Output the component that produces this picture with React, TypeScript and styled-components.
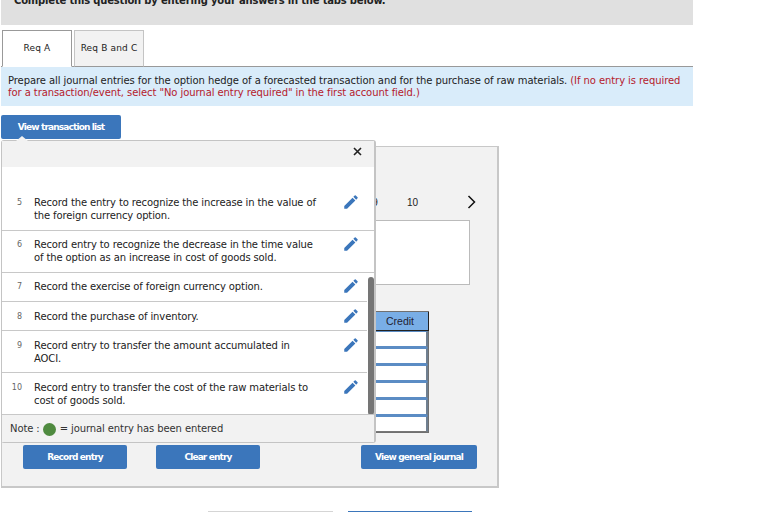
import React from "react";
import styled, { createGlobalStyle } from "styled-components";
import { MdEdit } from "react-icons/md";

const Global = createGlobalStyle`
  html, body { margin: 0; padding: 0; background: #fff; }
  body { font-family: "DejaVu Sans", Verdana, sans-serif; font-size: 10px; color: #222; overflow: hidden; }
`;

const Page = styled.div`
  width: 766px;
  height: 512px;
  overflow: hidden;
  padding-left: 1px;
  box-sizing: border-box;
`;

const Column = styled.div`
  width: 692px;
`;

const Banner = styled.div`
  height: 25px;
  background: #e0e0e0;
  font-weight: 700;
  font-size: 10px;
  line-height: 12px;
  letter-spacing: -0.18px;
  color: #222;
  padding-left: 13px;
  box-sizing: border-box;
  overflow: hidden;
  white-space: nowrap;
  & > span { display: block; margin-top: -5px; }
`;

const Tabs = styled.div`
  display: flex;
  gap: 2px;
  margin-top: 5px;
  padding-left: 1px;
  height: 36px;
  border-bottom: 1px solid #999;
`;

const Tab = styled.div<{ $active?: boolean }>`
  width: 70px;
  height: 37px;
  box-sizing: border-box;
  display: flex;
  align-items: center;
  justify-content: center;
  font-size: 9px;
  letter-spacing: 0.15px;
  border: 1px solid ${(p) => (p.$active ? "#999" : "#c4c4c4")};
  border-bottom: 1px solid ${(p) => (p.$active ? "#fff" : "#999")};
  background: ${(p) => (p.$active ? "#fff" : "#f2f2f2")};
  padding-bottom: 2px;
  color: #222;
`;

const Instruction = styled.div`
  background: #d9ecfa;
  height: 39px;
  padding: 8px 7px 0;
  box-sizing: border-box;
  font-size: 10px;
  line-height: 12px;
  letter-spacing: -0.075px;
  color: #222;
  white-space: nowrap;
`;

const Red = styled.span`
  color: #b5202c;
`;

const Btn = styled.div<{ $w: number }>`
  width: ${(p) => p.$w}px;
  height: 24px;
  background: #3b76bb;
  border-radius: 2px;
  color: #fff;
  font-weight: 700;
  font-size: 9px;
  letter-spacing: -0.85px;
  display: flex;
  align-items: center;
  justify-content: center;
  flex: none;
`;

const ListBtnRow = styled.div`
  margin-top: 9px;
`;

const Stage = styled.div`
  position: relative;
  margin-top: 7px;
  width: 498px;
`;

const Panel = styled.div`
  width: 498px;
  height: 342px;
  background: #f2f2f2;
  border: 1px solid #c8c8c8;
  border-width: 1px 2px 2px 1px;
  box-sizing: border-box;
  display: flex;
  flex-direction: column;
  padding-top: 47px;
`;

const Pager = styled.div`
  display: flex;
  align-items: center;
  justify-content: flex-end;
  height: 16px;
  padding-right: 21px;
  font-family: "Liberation Sans", Arial, sans-serif;
  font-size: 10px;
  color: #222;
`;

const PageNum = styled.span`
  margin-right: 29px;
`;

const Current = styled.span`
  margin-right: 49px;
`;

const Desc = styled.div`
  align-self: flex-end;
  width: 100px;
  height: 65px;
  background: #fff;
  border: 1px solid #bbb;
  box-sizing: border-box;
  margin: 10px 27px 0 0;
`;

const Ledger = styled.div`
  align-self: flex-end;
  width: 150px;
  margin: 26px 68px 0 0;
  border: 1px solid #707070;
  border-width: 1px 1px 1px 0;
  box-sizing: border-box;
`;

const LedgerHead = styled.div`
  height: 19px;
  box-sizing: border-box;
  background: #79aee6;
  border-bottom: 1px solid #222;
  border-right: 1px solid #222;
  margin-right: -1px;
  display: flex;
  justify-content: flex-end;
  align-items: center;
  font-family: "Liberation Sans", Arial, sans-serif;
  font-size: 10.5px;
  color: #223;
  & > span { width: 56px; text-align: center; }
`;

const LedgerRow = styled.div`
  position: relative;
  height: 17px;
  background: #fff;
  box-sizing: border-box;
  border-top: 1px solid #5b8cc4;
  border-bottom: 2px solid #5b8cc4;
  border-right: 2px solid #6f7f90;
  &::after {
    content: "";
    position: absolute;
    right: 50px;
    top: 1px;
    width: 2px;
    height: 2px;
    background: #3b76bb;
  }
  &:last-child { border-bottom: 1px solid #777; height: 16px; }
`;

const Actions = styled.div`
  display: flex;
  margin-top: 12px;
  padding-left: 21px;
`;

const Gap = styled.div<{ $w: number }>`
  width: ${(p) => p.$w}px;
  flex: none;
`;

const Popup = styled.div`
  position: absolute;
  left: 0;
  top: -6px;
  width: 375px;
  height: 303px;
  background: #fff;
  border: 1px solid #c4c4c4;
  border-right-width: 2px;
  border-radius: 3px;
  box-sizing: border-box;
  display: flex;
  flex-direction: column;
  &::before {
    content: "";
    position: absolute;
    left: 14px;
    top: -5px;
    border-left: 6px solid transparent;
    border-right: 6px solid transparent;
    border-bottom: 5px solid #f2f2f2;
  }
`;

const PopHead = styled.div`
  height: 26px;
  background: #f2f2f2;
  flex: none;
  display: flex;
  justify-content: flex-end;
  padding: 6px 12px 0 0;
  box-sizing: border-box;
`;

const List = styled.div`
  position: relative;
  flex: 1;
  padding-top: 22px;
  overflow: hidden;
`;

const Row = styled.div<{ $h: number; $pad: number; $last?: boolean }>`
  height: ${(p) => p.$h}px;
  box-sizing: border-box;
  border-bottom: ${(p) => (p.$last ? "0" : "1px solid #c8c8c8")};
  display: flex;
  align-items: flex-start;
  padding-top: ${(p) => p.$pad}px;
  position: relative;
`;

const Num = styled.div`
  width: 20px;
  flex: none;
  text-align: right;
  font-size: 8px;
  line-height: 13px;
  color: #666;
`;

const RowText = styled.div`
  margin-left: 12px;
  width: 284px;
  font-size: 10px;
  line-height: 13px;
  letter-spacing: -0.12px;
  color: #222;
`;

const Edit = styled.div<{ $top: number }>`
  position: absolute;
  left: 340px;
  top: ${(p) => p.$top}px;
  color: #3b76bb;
  display: flex;
`;

const Thumb = styled.div`
  position: absolute;
  right: 0;
  top: 110px;
  width: 6px;
  height: 138px;
  background: #757575;
  border-radius: 3px;
  box-shadow: -1px 0 #fff, 1px 0 #fff;
`;

const Note = styled.div`
  height: 28px;
  flex: none;
  background: #f2f2f2;
  border-top: 1px solid #c8c8c8;
  box-sizing: border-box;
  display: flex;
  align-items: center;
  padding-left: 8px;
  font-size: 10px;
  letter-spacing: -0.1px;
  color: #333;
  white-space: nowrap;
`;

const Dot = styled.span`
  width: 13px;
  height: 13px;
  border-radius: 50%;
  background: #4f8a3f;
  margin: 2px 4px 0 3px;
  flex: none;
`;

const Footer = styled.div`
  display: flex;
  margin: 23px 0 0 207px;
  gap: 15px;
`;

const Stub = styled.div<{ $w: number; $c: string }>`
  width: ${(p) => p.$w}px;
  height: 2px;
  border-top: 1px solid ${(p) => p.$c};
`;

const rows = [
  { n: 5, h: 42, p: 7, t: "Record the entry to recognize the increase in the value of the foreign currency option." },
  { n: 6, h: 42, p: 7, t: "Record entry to recognize the decrease in the time value of the option as an increase in cost of goods sold." },
  { n: 7, h: 29, p: 7, t: "Record the exercise of foreign currency option." },
  { n: 8, h: 29, p: 8, t: "Record the purchase of inventory." },
  { n: 9, h: 42, p: 8, t: "Record entry to transfer the amount accumulated in AOCI." },
  { n: 10, h: 41, p: 8, t: "Record entry to transfer the cost of the raw materials to cost of goods sold." },
];

export default function App() {
  return (
    <Page>
      <Global />
      <Column>
        <Banner><span>Complete this question by entering your answers in the tabs below.</span></Banner>
        <Tabs>
          <Tab $active>Req A</Tab>
          <Tab>Req B and C</Tab>
        </Tabs>
        <Instruction>
          Prepare all journal entries for the option hedge of a forecasted transaction and for the purchase of raw materials. <Red>(If no entry is required</Red>
          <br />
          <Red>for a transaction/event, select "No journal entry required" in the first account field.)</Red>
        </Instruction>
        <ListBtnRow>
          <Btn $w={120}>View transaction list</Btn>
        </ListBtnRow>
        <Stage>
          <Panel>
            <Pager>
              <PageNum>9</PageNum>
              <Current>10</Current>
              <svg width="9" height="14" viewBox="0 0 9 14" fill="none" stroke="#111" strokeWidth="1.5">
                <path d="M1.5 1 L7.5 7 L1.5 13" />
              </svg>
            </Pager>
            <Desc />
            <Ledger>
              <LedgerHead><span>Credit</span></LedgerHead>
              {Array.from({ length: 6 }).map((_, i) => <LedgerRow key={i} />)}
            </Ledger>
            <Actions>
              <Btn $w={104}>Record entry</Btn>
              <Gap $w={29} />
              <Btn $w={104}>Clear entry</Btn>
              <Gap $w={101} />
              <Btn $w={116}>View general journal</Btn>
            </Actions>
          </Panel>
          <Popup>
            <PopHead>
              <svg width="9" height="9" viewBox="0 0 9 9" stroke="#222" strokeWidth="1.6">
                <path d="M1 1 L8 8 M8 1 L1 8" />
              </svg>
            </PopHead>
            <List>
              {rows.map((r, i) => (
                <Row key={r.n} $h={r.h} $pad={r.p} $last={i === rows.length - 1}>
                  <Num>{r.n}</Num>
                  <RowText>{r.t}</RowText>
                  <Edit $top={r.p - 3}><MdEdit size={18} /></Edit>
                </Row>
              ))}
              <Thumb />
            </List>
            <Note>Note :<Dot />= journal entry has been entered</Note>
          </Popup>
        </Stage>
      </Column>
      <Footer>
        <Stub $w={125} $c="#d5d5d5" />
        <Stub $w={124} $c="#3b76bb" />
      </Footer>
    </Page>
  );
}
